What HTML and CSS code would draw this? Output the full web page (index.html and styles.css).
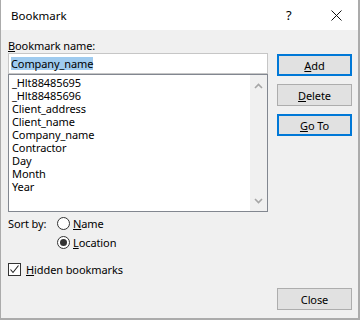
FILE: index.html
```html
<!DOCTYPE html>
<html>
<head>
<meta charset="utf-8">
<link rel="stylesheet" href="styles.css">
</head>
<body>
<div class="window">
  <div class="titlebar">
    <span class="title">Bookmark</span>
    <span class="help">?</span>
    <span class="close-x">
      <svg width="11" height="11" viewBox="0 0 11 11"><path d="M0.5 0.5 L10.5 10.5 M10.5 0.5 L0.5 10.5" stroke="#111" stroke-width="1" fill="none"/></svg>
    </span>
  </div>
  <div class="body">
    <div class="left">
      <div class="label"><u>B</u>ookmark name:</div>
      <div class="textbox"><span class="sel">Company_name</span></div>
      <div class="list">
        <div class="items">
          <div class="item">_Hlt88485695</div>
          <div class="item">_Hlt88485696</div>
          <div class="item">Client_address</div>
          <div class="item">Client_name</div>
          <div class="item">Company_name</div>
          <div class="item">Contractor</div>
          <div class="item">Day</div>
          <div class="item">Month</div>
          <div class="item">Year</div>
        </div>
        <div class="scrollbar">
          <svg class="arrow" width="9" height="6" viewBox="0 0 9 6"><path d="M1 5 L4.5 1.5 L8 5" stroke="#a6a6a6" stroke-width="1.6" fill="none"/></svg>
          <svg class="arrow" width="9" height="6" viewBox="0 0 9 6"><path d="M1 1 L4.5 4.5 L8 1" stroke="#a6a6a6" stroke-width="1.6" fill="none"/></svg>
        </div>
      </div>
      <div class="sort">
        <span class="sort-label">Sort by:</span>
        <div class="radios">
          <div class="opt"><span class="radio"></span><span><u>N</u>ame</span></div>
          <div class="opt"><span class="radio on"></span><span><u>L</u>ocation</span></div>
        </div>
      </div>
      <div class="check-row">
        <span class="checkbox">
          <svg width="11" height="11" viewBox="0 0 11 11"><path d="M1.5 5.5 L4 8.5 L9.5 1.5" stroke="#222" stroke-width="1.1" fill="none"/></svg>
        </span>
        <span><u>H</u>idden bookmarks</span>
      </div>
    </div>
    <div class="right">
      <div class="btn default"><u>A</u>dd</div>
      <div class="btn"><u>D</u>elete</div>
      <div class="btn default"><u>G</u>o To</div>
      <div class="btn close">Close</div>
    </div>
  </div>
</div>
</body>
</html>
```

FILE: styles.css
```css
html, body {
  margin: 0;
  padding: 0;
  background: #f0f0f0;
}
.window {
  width: 360px;
  height: 320px;
  box-sizing: border-box;
  border-left: 1px solid #ababab;
  border-right: 2px solid #ababab;
  border-bottom: 2px solid #ababab;
  background: #f0f0f0;
  font-family: "Noto Sans", "Open Sans", sans-serif;
  font-size: 11px;
  letter-spacing: -0.1px;
  color: #000;
  display: flex;
  flex-direction: column;
}
.titlebar {
  height: 30px;
  background: #fff;
  display: flex;
  align-items: center;
  flex-shrink: 0;
}
.title {
  font-size: 11.5px;
  letter-spacing: 0;
  margin-left: 10px;
  flex: 1;
}
.help {
  font-size: 13px;
  width: 8px;
  margin-right: 37px;
}
.close-x {
  display: flex;
  margin-right: 16px;
}
.body {
  flex: 1;
  display: flex;
  padding: 8px 6px 8px 7px;
}
.left {
  width: 260px;
  display: flex;
  flex-direction: column;
}
.label {
  height: 15px;
  line-height: 15px;
}
u {
  text-decoration: underline;
  text-underline-offset: 1px;
}
.textbox {
  height: 21px;
  box-sizing: border-box;
  border: 1px solid #c6c6c6;
  background: #fff;
  display: flex;
  align-items: center;
  padding-left: 2px;
}
.sel {
  background: #9fcbef;
  line-height: 13px;
  height: 13px;
}
.list {
  height: 138px;
  box-sizing: border-box;
  border: 1px solid #828790;
  background: #fff;
  display: flex;
}
.items {
  flex: 1;
  padding: 1px 0 0 3px;
}
.item {
  line-height: 13px;
  height: 13px;
}
.scrollbar {
  width: 17px;
  background: #f0f0f0;
  display: flex;
  flex-direction: column;
  justify-content: space-between;
  align-items: center;
  padding: 8px 0 7px;
}
.sort {
  display: flex;
  margin-top: 2px;
}
.sort-label {
  width: 49px;
  line-height: 19px;
}
.radios {
  display: flex;
  flex-direction: column;
}
.opt {
  display: flex;
  align-items: center;
  height: 19px;
  gap: 3px;
}
.radio {
  width: 13px;
  height: 13px;
  box-sizing: border-box;
  border: 1px solid #333;
  border-radius: 50%;
  background: #fff;
  display: flex;
  align-items: center;
  justify-content: center;
}
.radio.on::after {
  content: "";
  width: 7px;
  height: 7px;
  border-radius: 50%;
  background: #333;
}
.check-row {
  display: flex;
  align-items: center;
  gap: 5px;
  margin-top: 10px;
  height: 15px;
}
.checkbox {
  width: 13px;
  height: 13px;
  box-sizing: border-box;
  border: 1px solid #333;
  background: #fff;
  display: flex;
  align-items: center;
  justify-content: center;
}
.right {
  width: 75px;
  margin-left: 9px;
  display: flex;
  flex-direction: column;
  padding-top: 16px;
  gap: 8px;
}
.btn {
  height: 22px;
  box-sizing: border-box;
  border: 1px solid #adadad;
  background: #e1e1e1;
  display: flex;
  align-items: center;
  justify-content: center;
}
.btn.default {
  border: 2px solid #0078d7;
}
.btn.close {
  margin-top: auto;
}
```
